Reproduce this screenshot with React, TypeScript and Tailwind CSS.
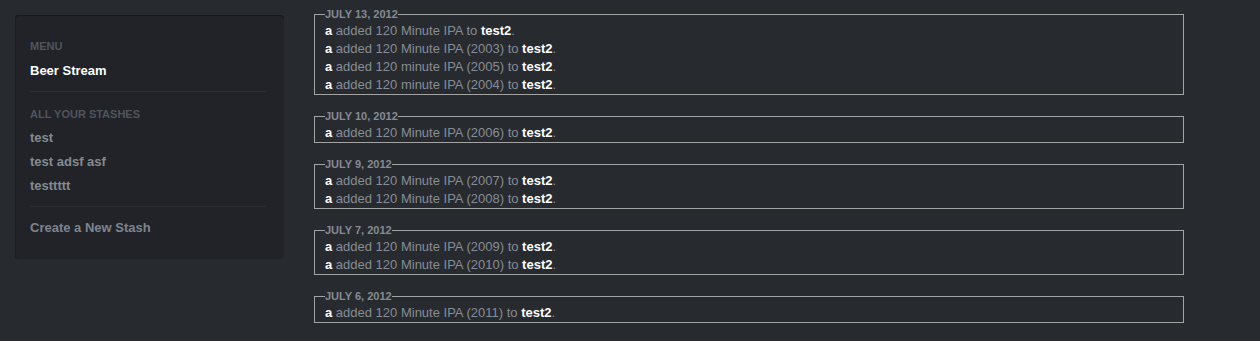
const days = [
  {
    date: "July 13, 2012",
    items: ["120 Minute IPA", "120 Minute IPA (2003)", "120 minute IPA (2005)", "120 minute IPA (2004)"],
  },
  { date: "July 10, 2012", items: ["120 Minute IPA (2006)"] },
  { date: "July 9, 2012", items: ["120 Minute IPA (2007)", "120 Minute IPA (2008)"] },
  { date: "July 7, 2012", items: ["120 Minute IPA (2009)", "120 Minute IPA (2010)"] },
  { date: "July 6, 2012", items: ["120 Minute IPA (2011)"] },
];

const stashes = ["test", "test adsf asf", "testtttt"];

export default function App() {
  return (
    <div
      className="flex min-h-[341px] bg-[#272a2f] antialiased"
      style={{ fontFamily: '"Liberation Sans", Arial, sans-serif' }}
    >
      {/* sidebar */}
      <div className="ml-[15px] mt-[15px] w-[269px] shrink-0 self-start">
        <nav className="h-[244px] rounded-[4px] bg-[#212328] pl-[15px] pr-[18px] pt-[24px] shadow-[inset_0_1px_0_#18191c,inset_1px_0_0_#1c1e21]">
          <div className="text-[11px] font-bold uppercase leading-[14px] text-[#50555c]">Menu</div>
          <div className="mt-[10px] text-[13px] font-bold leading-[16px] text-white">Beer Stream</div>
          <div className="mt-[12px] h-px bg-[#2b2e33]" />
          <div className="mt-[15px] text-[11px] font-bold uppercase leading-[14px] text-[#50555c]">
            All your stashes
          </div>
          <ul className="mt-[9px] flex flex-col gap-[8px]">
            {stashes.map((s) => (
              <li key={s} className="text-[13px] font-bold leading-[16px] text-[#858a91]">
                {s}
              </li>
            ))}
          </ul>
          <div className="mt-[12px] h-px bg-[#2b2e33]" />
          <div className="mt-[13px] text-[13px] font-bold leading-[16px] text-[#7e858f]">Create a New Stash</div>
        </nav>
      </div>

      {/* stream */}
      <main className="ml-[30px] flex w-[870px] flex-col gap-[14px] pt-[7px]">
        {days.map((day) => (
          <fieldset key={day.date} className="border border-[#a3a3a3] pl-[10px]">
            <legend className="h-[14px] text-[11px] font-bold uppercase leading-[14px] text-[#858b93]">
              {day.date}
            </legend>
            <div className="pt-[1px]">
              {day.items.map((beer) => (
                <div key={beer} className="text-[13px] leading-[18px] text-[#878d95]">
                  <span className="font-bold text-white">a</span> added {beer} to{" "}
                  <span className="font-bold text-white">test2</span>.
                </div>
              ))}
            </div>
          </fieldset>
        ))}
      </main>
    </div>
  );
}
